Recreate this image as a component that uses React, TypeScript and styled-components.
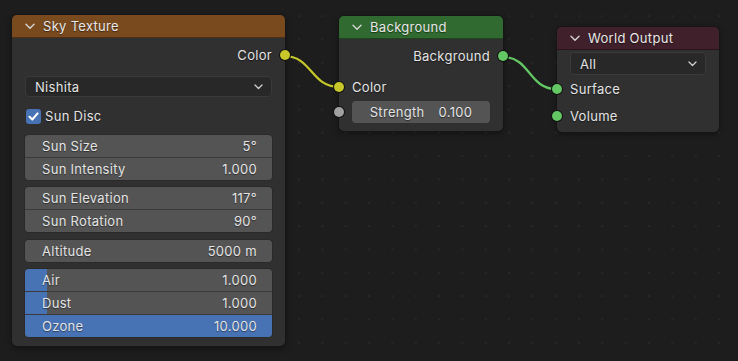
import styled, { createGlobalStyle } from "styled-components";

const GlobalStyle = createGlobalStyle`
  html, body {
    margin: 0;
    padding: 0;
    background: #1d1d1d;
  }
  * {
    box-sizing: border-box;
  }
`;

const SOCKET = {
  color: "#c7c729",
  shader: "#63c763",
  float: "#a1a1a1",
};

const App = () => {
  return (
    <>
      <GlobalStyle />
      <Canvas>
        <Links width="738" height="361">
          <path d="M284 56 C 312 56, 311 87, 339 87" stroke={SOCKET.color} />
          <path d="M503 57 C 530 57, 529 89, 556 89" stroke={SOCKET.shader} />
        </Links>

        <Node $left={12} $top={15} $width={273}>
          <Header $color="#7a4a1f">
            <Chevron />
            Sky Texture
          </Header>
          <Body>
            <SocketRow $align="right">
              Color
              <Socket $side="right" $color={SOCKET.color} />
            </SocketRow>
            <Dropdown $mt={10}>
              Nishita
              <SmallChevron />
            </Dropdown>
            <CheckRow>
              <CheckBox>
                <svg width="11" height="11" viewBox="0 0 11 11">
                  <path d="M1.5 5.8 L4.3 8.5 L9.6 2.4" fill="none" stroke="#fff" strokeWidth="2" strokeLinecap="round" strokeLinejoin="round" />
                </svg>
              </CheckBox>
              Sun Disc
            </CheckRow>
            <FieldGroup $mt={8}>
              <Field label="Sun Size" value="5°" />
              <Field label="Sun Intensity" value="1.000" />
            </FieldGroup>
            <FieldGroup $mt={7}>
              <Field label="Sun Elevation" value="117°" />
              <Field label="Sun Rotation" value="90°" />
            </FieldGroup>
            <FieldGroup $mt={8}>
              <Field label="Altitude" value="5000 m" />
            </FieldGroup>
            <FieldGroup $mt={7}>
              <Field label="Air" value="1.000" fill={9} />
              <Field label="Dust" value="1.000" fill={9} />
              <Field label="Ozone" value="10.000" fill={100} />
            </FieldGroup>
          </Body>
        </Node>

        <Node $left={339} $top={16} $width={164}>
          <Header $color="#306a30">
            <Chevron />
            Background
          </Header>
          <Body $pb={8}>
            <SocketRow $align="right">
              Background
              <Socket $side="right" $color={SOCKET.shader} />
            </SocketRow>
            <SocketRow $mt={9}>
              <Socket $side="left" $color={SOCKET.color} />
              Color
            </SocketRow>
            <SocketRow $mt={3}>
              <Socket $side="left" $color={SOCKET.float} />
              <CenterField>
                <span>Strength</span>
                <span>0.100</span>
              </CenterField>
            </SocketRow>
          </Body>
        </Node>

        <Node $left={557} $top={27} $width={162}>
          <Header $color="#40202a">
            <Chevron />
            World Output
          </Header>
          <Body $pt={2} $pb={5}>
            <Dropdown $mt={0} $h={23}>
              All
              <SmallChevron />
            </Dropdown>
            <SocketRow $mt={3}>
              <Socket $side="left" $color={SOCKET.shader} />
              Surface
            </SocketRow>
            <SocketRow $mt={5}>
              <Socket $side="left" $color={SOCKET.shader} />
              Volume
            </SocketRow>
          </Body>
        </Node>
      </Canvas>
    </>
  );
};

const Field = ({ label, value, fill }: { label: string; value: string; fill?: number }) => (
  <FieldRow>
    {fill !== undefined && <FieldFill style={{ width: `${fill}%` }} />}
    <FieldLabel>{label}</FieldLabel>
    <FieldLabel>{value}</FieldLabel>
  </FieldRow>
);

const Chevron = () => (
  <svg width="10" height="7" viewBox="0 0 10 7" style={{ marginRight: 8, flexShrink: 0 }}>
    <path d="M1 1.2 L5 5.2 L9 1.2" fill="none" stroke="#d6d6d6" strokeWidth="1.4" strokeLinecap="round" strokeLinejoin="round" />
  </svg>
);

const SmallChevron = () => (
  <svg width="9" height="6" viewBox="0 0 9 6">
    <path d="M1 1 L4.5 4.5 L8 1" fill="none" stroke="#d0d0d0" strokeWidth="1.3" strokeLinecap="round" strokeLinejoin="round" />
  </svg>
);

const Canvas = styled.div`
  position: relative;
  width: 738px;
  height: 361px;
  overflow: hidden;
  background-color: #1d1d1d;
  background-image: radial-gradient(circle, #282828 0.9px, transparent 1.1px);
  background-size: 23.33px 23.33px;
  background-position: 7.5px 4.5px;
  font-family: Inter, "DejaVu Sans", sans-serif;
  font-size: 13px;
  letter-spacing: 0.3px;
  color: #e4e4e4;
`;

const Links = styled.svg`
  position: absolute;
  left: 0;
  top: 0;
  pointer-events: none;

  path {
    fill: none;
    stroke-width: 2.2;
  }
`;

const Node = styled.div<{ $left: number; $top: number; $width: number }>`
  position: absolute;
  left: ${(p) => p.$left}px;
  top: ${(p) => p.$top}px;
  width: ${(p) => p.$width}px;
  background: #303030;
  border-radius: 5px;
  box-shadow: 0 0 0 1px #161616, 0 2px 6px rgba(0, 0, 0, 0.45);
`;

const Header = styled.div<{ $color: string }>`
  display: flex;
  align-items: center;
  height: 23px;
  padding-left: 13px;
  background: ${(p) => p.$color};
  border-radius: 5px 5px 0 0;
  border-bottom: 1px solid rgba(0, 0, 0, 0.35);
  text-shadow: 0 1px 1px rgba(0, 0, 0, 0.5);
  color: #e8e8e8;
`;

const Body = styled.div<{ $pt?: number; $pb?: number }>`
  display: flex;
  flex-direction: column;
  padding: ${(p) => p.$pt ?? 6}px 13px ${(p) => p.$pb ?? 9}px 13px;
`;

const SocketRow = styled.div<{ $align?: "right"; $mt?: number }>`
  position: relative;
  display: flex;
  align-items: center;
  justify-content: ${(p) => (p.$align === "right" ? "flex-end" : "flex-start")};
  height: 22px;
  margin-top: ${(p) => p.$mt ?? 0}px;
  margin-left: -13px;
  margin-right: -13px;
  padding: 0 13px;
  text-shadow: 0 1px 1px rgba(0, 0, 0, 0.5);
`;

const Socket = styled.span<{ $side: "left" | "right"; $color: string }>`
  position: absolute;
  top: 50%;
  ${(p) => p.$side}: -5px;
  width: 10px;
  height: 10px;
  margin-top: -5px;
  border-radius: 50%;
  background: ${(p) => p.$color};
  box-shadow: 0 0 0 1px #111;
`;

const Dropdown = styled.div<{ $mt: number; $h?: number }>`
  display: flex;
  align-items: center;
  justify-content: space-between;
  height: ${(p) => p.$h ?? 21}px;
  margin-top: ${(p) => p.$mt}px;
  padding: 0 8px 0 9px;
  background: #282828;
  border: 1px solid #3a3a3a;
  border-radius: 4px;
  text-shadow: 0 1px 1px rgba(0, 0, 0, 0.5);
`;

const CheckRow = styled.div`
  display: flex;
  align-items: center;
  gap: 4px;
  height: 22px;
  margin-top: 8px;
  padding-left: 1px;
  text-shadow: 0 1px 1px rgba(0, 0, 0, 0.5);
`;

const CheckBox = styled.span`
  display: flex;
  align-items: center;
  justify-content: center;
  width: 15px;
  height: 15px;
  border-radius: 3px;
  background: #4772b3;
`;

const FieldGroup = styled.div<{ $mt: number }>`
  display: flex;
  flex-direction: column;
  gap: 1px;
  margin-top: ${(p) => p.$mt}px;
  background: #3a3a3a;
  border-radius: 4px;
  overflow: hidden;
  box-shadow: 0 0 0 1px #2a2a2a;
`;

const FieldRow = styled.div`
  position: relative;
  display: flex;
  align-items: center;
  justify-content: space-between;
  height: 22px;
  padding: 0 15px 0 17px;
  background: #545454;
`;

const FieldFill = styled.span`
  position: absolute;
  left: 0;
  top: 0;
  bottom: 0;
  background: #4772b3;
`;

const FieldLabel = styled.span`
  position: relative;
  text-shadow: 0 1px 1px rgba(0, 0, 0, 0.45);
`;

const CenterField = styled.div`
  display: flex;
  align-items: center;
  justify-content: center;
  gap: 14px;
  flex: 1;
  height: 22px;
  background: #545454;
  border-radius: 4px;
`;

export default App;
